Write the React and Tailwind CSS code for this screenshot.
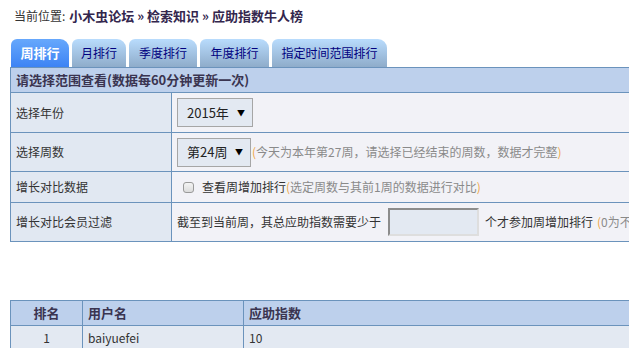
const TABS = [
  { label: "周排行", width: "w-[58px]", active: true },
  { label: "月排行", width: "w-[54px]" },
  { label: "季度排行", width: "w-[68px]" },
  { label: "年度排行", width: "w-[69px]" },
  { label: "指定时间范围排行", width: "w-[115px]" },
];

const RANKS = [{ rank: 1, name: "baiyuefei", score: 10 }];

function Tab({ label, width, active }) {
  return (
    <div
      className={`${width} flex h-[28px] items-center justify-center rounded-tl-[6px] rounded-tr-[9px] text-[12px] ${
        active
          ? "bg-gradient-to-b from-[#67a8fc] to-[#3d83f4] text-[13px] font-bold text-white"
          : "bg-gradient-to-b from-[#b9dcfd] to-[#8facca] text-[#000080]"
      }`}
    >
      {label}
    </div>
  );
}

function FakeSelect({ value, width }) {
  return (
    <div
      className={`${width} inline-flex h-[29px] shrink-0 items-center justify-between border border-[#a6a6a6] bg-[#e3e9f2] pl-[9px] pr-[7px] text-[13px] text-[#222]`}
    >
      <span>{value}</span>
      <span className="text-[8px] text-black">▼</span>
    </div>
  );
}

function Hint({ children }) {
  return (
    <span className="text-[#8a8a8a]">
      <span className="text-[#f0a646]">(</span>
      {children}
      <span className="text-[#f0a646]">)</span>
    </span>
  );
}

const cell = "border border-[#6b93bc]";

export default function App() {
  return (
    <div
      className="h-[348px] w-[629px] overflow-hidden bg-white text-[12px] text-[#333]"
      style={{ fontFamily: '"Microsoft YaHei", "Noto Sans CJK SC", sans-serif' }}
    >
      <div className="flex h-[39px] items-start pl-[14px] pt-[7px] leading-[18px]">
        <span>当前位置:</span>
        <span className="ml-[4px] text-[13px] font-bold text-[#33264d]">
          小木虫论坛 » 检索知识 » 应助指数牛人榜
        </span>
      </div>

      <div className="ml-[11px] flex items-end gap-[3px]">
        {TABS.map((tab) => (
          <Tab key={tab.label} {...tab} />
        ))}
      </div>

      <table className="ml-[10px] w-[720px] table-fixed border-collapse">
        <colgroup>
          <col className="w-[161px]" />
          <col />
        </colgroup>
        <tbody>
          <tr className="h-[25px] bg-[#bdd0ec]">
            <td colSpan={2} className={`${cell} pl-[5px] text-[13px] font-bold text-[#3a3450]`}>
              请选择范围查看(数据每60分钟更新一次)
            </td>
          </tr>
          <tr className="h-[40px]">
            <td className={`${cell} bg-[#e1e8f2] pl-[5px]`}>选择年份</td>
            <td className={`${cell} bg-[#f2f2f7] pl-[5px]`}>
              <FakeSelect value="2015年" width="w-[76px]" />
            </td>
          </tr>
          <tr className="h-[39px]">
            <td className={`${cell} bg-[#e1e8f2] pl-[5px]`}>选择周数</td>
            <td className={`${cell} bg-[#f2f2f7] pl-[5px]`}>
              <div className="flex items-center">
                <FakeSelect value="第24周" width="w-[74px]" />
                <span className="ml-[1px]">
                  <Hint>今天为本年第27周，请选择已经结束的周数，数据才完整</Hint>
                </span>
              </div>
            </td>
          </tr>
          <tr className="h-[31px]">
            <td className={`${cell} bg-[#e1e8f2] pl-[5px]`}>增长对比数据</td>
            <td className={`${cell} bg-[#f2f2f7] pl-[11px]`}>
              <div className="flex items-center">
                <span className="h-[11px] w-[11px] rounded-[3px] border border-[#9a9a9a] bg-gradient-to-b from-[#f4f4f4] to-[#dcdcdc]" />
                <span className="ml-[8px]">查看周增加排行</span>
                <Hint>选定周数与其前1周的数据进行对比</Hint>
              </div>
            </td>
          </tr>
          <tr className="h-[39px]">
            <td className={`${cell} bg-[#e1e8f2] pl-[5px]`}>增长对比会员过滤</td>
            <td className={`${cell} bg-[#f2f2f7] pl-[5px]`}>
              <div className="flex items-center whitespace-nowrap">
                <span>截至到当前周，其总应助指数需要少于</span>
                <span className="ml-[7px] h-[28px] w-[91px] border-2 border-t-[#8c8c8c] border-l-[#8c8c8c] border-r-[#dedede] border-b-[#dedede] bg-[#e3e9f2]" />
                <span className="ml-[6px]">个才参加周增加排行</span>
                <span className="ml-[4px]">
                  <Hint>0为不限制</Hint>
                </span>
              </div>
            </td>
          </tr>
        </tbody>
      </table>

      <table className="ml-[10px] mt-[58px] w-[720px] table-fixed border-collapse">
        <colgroup>
          <col className="w-[72px]" />
          <col className="w-[161px]" />
          <col />
        </colgroup>
        <thead>
          <tr className="h-[25px] bg-[#bdd0ec] text-[13px] font-bold text-[#3a3450]">
            <th className={`${cell} text-center`}>排名</th>
            <th className={`${cell} pl-[5px] text-left`}>用户名</th>
            <th className={`${cell} pl-[5px] text-left`}>应助指数</th>
          </tr>
        </thead>
        <tbody>
          {RANKS.map((row) => (
            <tr key={row.rank} className="h-[25px] bg-[#e3e9f2] text-[#333]">
              <td className={`${cell} text-center`}>{row.rank}</td>
              <td className={`${cell} pl-[5px]`}>{row.name}</td>
              <td className={`${cell} pl-[5px]`}>{row.score}</td>
            </tr>
          ))}
        </tbody>
      </table>
    </div>
  );
}
